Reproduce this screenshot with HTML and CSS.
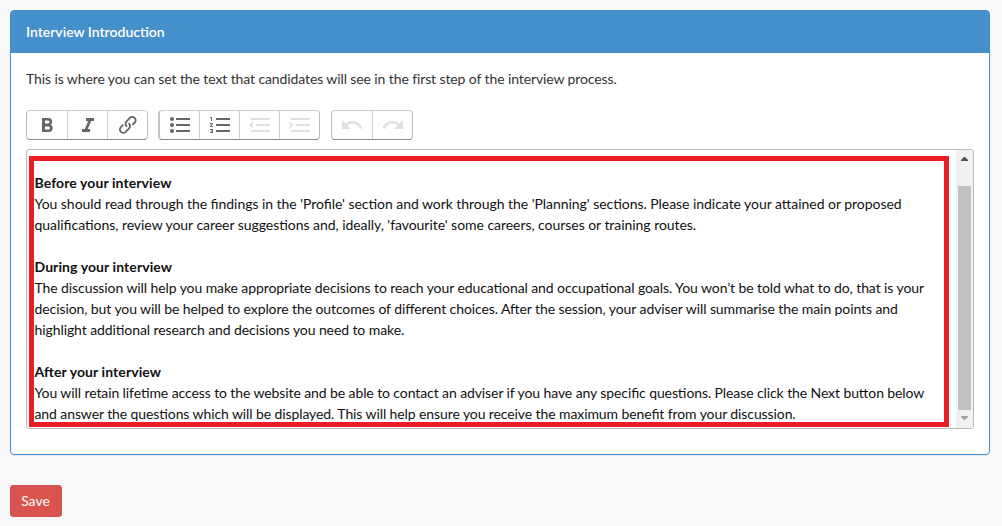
FILE: index.html
```html
<!DOCTYPE html>
<html lang="en">
<head>
    <meta charset="UTF-8">
    <meta name="viewport" content="width=device-width, initial-scale=1.0">
    <title>Interview Introduction</title>
    <link rel="stylesheet" href="styles.css">
</head>
<body>
    <div class="panel">
        <div class="panel-heading">Interview Introduction</div>
        <div class="panel-body">
            <p class="help-text">This is where you can set the text that candidates will see in the first step of the interview process.</p>

            <div class="toolbar">
                <div class="button-group">
                    <button class="tool" title="Bold"><svg viewBox="0 0 24 24"><path d="M15.6 11.8c1-.7 1.6-1.8 1.6-2.8a4 4 0 0 0-4-4H7v14h7c2.1 0 3.7-1.7 3.7-3.8 0-1.5-.8-2.8-2.1-3.4zM10 7.5h3a1.5 1.5 0 1 1 0 3h-3v-3zm3.5 9H10v-3h3.5a1.5 1.5 0 1 1 0 3z"/></svg></button>
                    <button class="tool" title="Italic"><svg viewBox="0 0 24 24"><path d="M10 5v3h2.2l-3.4 8H6v3h8v-3h-2.2l3.4-8H18V5h-8z"/></svg></button>
                    <button class="tool" title="Link"><svg viewBox="0 0 24 24"><path d="M9.88 13.7a4.3 4.3 0 0 1 0-6.07l3.37-3.37a4.26 4.26 0 0 1 6.07 0 4.3 4.3 0 0 1 0 6.06l-1.96 1.72a.91.91 0 1 1-1.3-1.3l1.97-1.71a2.46 2.46 0 0 0-3.48-3.48l-3.38 3.37a2.46 2.46 0 0 0 0 3.48.91.91 0 1 1-1.3 1.3z"/><path d="M4.25 19.46a4.3 4.3 0 0 1 0-6.07l1.93-1.9a.91.91 0 1 1 1.3 1.3l-1.93 1.9a2.46 2.46 0 0 0 3.48 3.48l3.37-3.38c.96-.96.96-2.52 0-3.48a.91.91 0 1 1 1.3-1.3 4.3 4.3 0 0 1 0 6.07l-3.38 3.38a4.26 4.26 0 0 1-6.07 0z"/></svg></button>
                </div>
                <div class="button-group list-tools">
                    <button class="tool" title="Bullets"><svg viewBox="0 0 24 24"><circle cx="4" cy="6" r="2"/><circle cx="4" cy="12" r="2"/><circle cx="4" cy="18" r="2"/><path d="M8 5h14v2H8zM8 11h14v2H8zM8 17h14v2H8z"/></svg></button>
                    <button class="tool" title="Numbers"><svg viewBox="0 0 24 24"><path d="M2 17h2v.5H3v1h1v.5H2v1h3v-4H2v1zm1-9h1V4H2v1h1v3zm-1 3h1.8L2 13.1v.9h3v-1H3.2L5 10.9V10H2v1zM8 5h14v2H8zM8 11h14v2H8zM8 17h14v2H8z"/></svg></button>
                    <button class="tool" title="Decrease Level" disabled><svg viewBox="0 0 24 24"><path d="M3 5h19v2H3zM8 11h14v2H8zM3 17h19v2H3zM4.1 8.7l1.4 1.4L3.7 12l1.8 1.9-1.400 1.400L.9 12z"/></svg></button>
                    <button class="tool" title="Increase Level" disabled><svg viewBox="0 0 24 24"><path d="M3 5h19v2H3zM8 11h14v2H8zM3 17h19v2H3zM2.300 8.700L.9 10.100 2.700 12 .9 13.900l1.400 1.400L5.500 12z"/></svg></button>
                </div>
                <div class="button-group">
                    <button class="tool" title="Undo" disabled><svg viewBox="0 0 24 24"><path d="M12.5 8c-2.600 0-5 1-6.900 2.600L2 7v9h9l-3.600-3.600A8 8 0 0 1 20 16l2.400-.8a10.500 10.500 0 0 0-9.900-7.200z"/></svg></button>
                    <button class="tool" title="Redo" disabled><svg viewBox="0 0 24 24"><path d="M18.400 10.600a10.500 10.500 0 0 0-16.900 4.600L4 16a8 8 0 0 1 12.700-3.600L13 16h9V7l-3.600 3.600z"/></svg></button>
                </div>
            </div>

            <div class="editor">
                <div class="editor-content">
                    <div class="text-block">
                        <div class="section before">
                            <strong>Before your interview</strong><br>
                            You should read through the findings in the 'Profile' section and work through the 'Planning' sections. Please indicate your attained or proposed<br>
                            qualifications, review your career suggestions and, ideally, 'favourite' some careers, courses or training routes.
                        </div>
                        <div class="section during">
                            <strong>During your interview</strong><br>
                            The discussion will help you make appropriate decisions to reach your educational and occupational goals. You won’t be told what to do, that is your<br>
                            decision, but you will be helped to explore the outcomes of different choices. After the session, your adviser will summarise the main points and<br>
                            highlight additional research and decisions you need to make.
                        </div>
                        <div class="section after">
                            <strong>After your interview</strong><br>
                            You will retain lifetime access to the website and be able to contact an adviser if you have any specific questions. Please click the Next button below<br>
                            and answer the questions which will be displayed. This will help ensure you receive the maximum benefit from your discussion.
                        </div>
                    </div>
                </div>
                <div class="scrollbar">
                    <svg class="arrow" viewBox="0 0 7 4"><path d="M3 0h1l3 3v1H0V3z"/></svg>
                    <div class="thumb"></div>
                    <svg class="arrow arrow-down" viewBox="0 0 7 4"><path d="M0 0h7v1L4 4H3L0 1z"/></svg>
                </div>
            </div>
        </div>
    </div>

    <button class="btn-save">Save</button>
</body>
</html>
```
FILE: styles.css
```css
* {
    box-sizing: border-box;
}
body {
    margin: 0;
    padding: 10px 12px 0 10px;
    height: 526px;
    overflow: hidden;
    background: #f9f9f9;
    color: #333;
    font-family: Lato, "Liberation Sans", sans-serif;
    font-size: 14px;
    line-height: 21px;
}
.panel {
    height: 445px;
    background: #fff;
    border: 1px solid #428bca;
    border-radius: 4px;
    box-shadow: 0 1px 1px rgba(0,0,0,0.05);
}
.panel-heading {
    height: 42px;
    padding: 11px 15px 0;
    line-height: 20px;
    background: #458fcb;
    color: #fff;
    font-weight: 600;
    border-radius: 2px 2px 0 0;
}
.panel-body {
    padding: 15px;
}
.help-text {
    margin: 0 0 21px;
    letter-spacing: -0.107px;
}
.toolbar {
    display: flex;
    gap: 11px;
    margin-bottom: 9px;
}
.button-group {
    display: flex;
    height: 30px;
    border: 1px solid #bbb;
    border-top-color: #ccc;
    border-bottom-color: #888;
    border-radius: 4px;
}
.button-group:first-child {
    margin-right: -1px;
}
.tool {
    display: flex;
    align-items: center;
    justify-content: center;
    width: 40px;
    height: 28px;
    padding: 0;
    background: none;
    border: none;
    border-left: 1px solid #ccc;
}
.tool:first-child {
    border-left: none;
}
.list-tools {
    border-left: 2px solid #c4c4c4;
}
.list-tools .tool:first-child {
    width: 39px;
    padding-left: 1px;
}
.tool svg {
    width: 24px;
    height: 24px;
    flex: none;
    fill: #666;
}
.tool:disabled svg {
    fill: #e0e0e0;
}
.editor {
    display: flex;
    height: 280px;
    border: 1px solid #bbb;
    border-radius: 3px;
    overflow: hidden;
}
.editor-content {
    flex: 1;
    padding: 6px 7px 1px 2px;
}
.text-block {
    height: 271px;
    padding-top: 11px;
    border: 5px solid #ed1c24;
    color: #111;
    white-space: nowrap;
}
.section {
    margin-bottom: 21px;
    padding-left: 0.5px;
    font-feature-settings: "liga" 1;
}
.section strong {
    font-weight: 700;
    letter-spacing: 0.09px;
}
.before {
    letter-spacing: -0.045px;
}
.during {
    letter-spacing: -0.088px;
}
.after {
    letter-spacing: -0.097px;
}
.scrollbar {
    display: flex;
    flex-direction: column;
    align-items: center;
    width: 17px;
    padding: 7px 2px 8px;
    background: #f1f1f1;
}
.arrow {
    width: 7px;
    height: 4px;
    fill: #505050;
}
.arrow-down {
    margin-top: 6px;
    fill: #a3a3a3;
}
.thumb {
    width: 13px;
    height: 225px;
    margin-top: 25px;
    background: #c1c1c1;
}
.btn-save {
    display: block;
    width: 52px;
    height: 32px;
    margin-top: 30px;
    padding: 0 1px 2px 0;
    background: #d9534f;
    border: 1px solid #d9534f;
    border-radius: 3px;
    color: #fff;
    font: inherit;
}
```
